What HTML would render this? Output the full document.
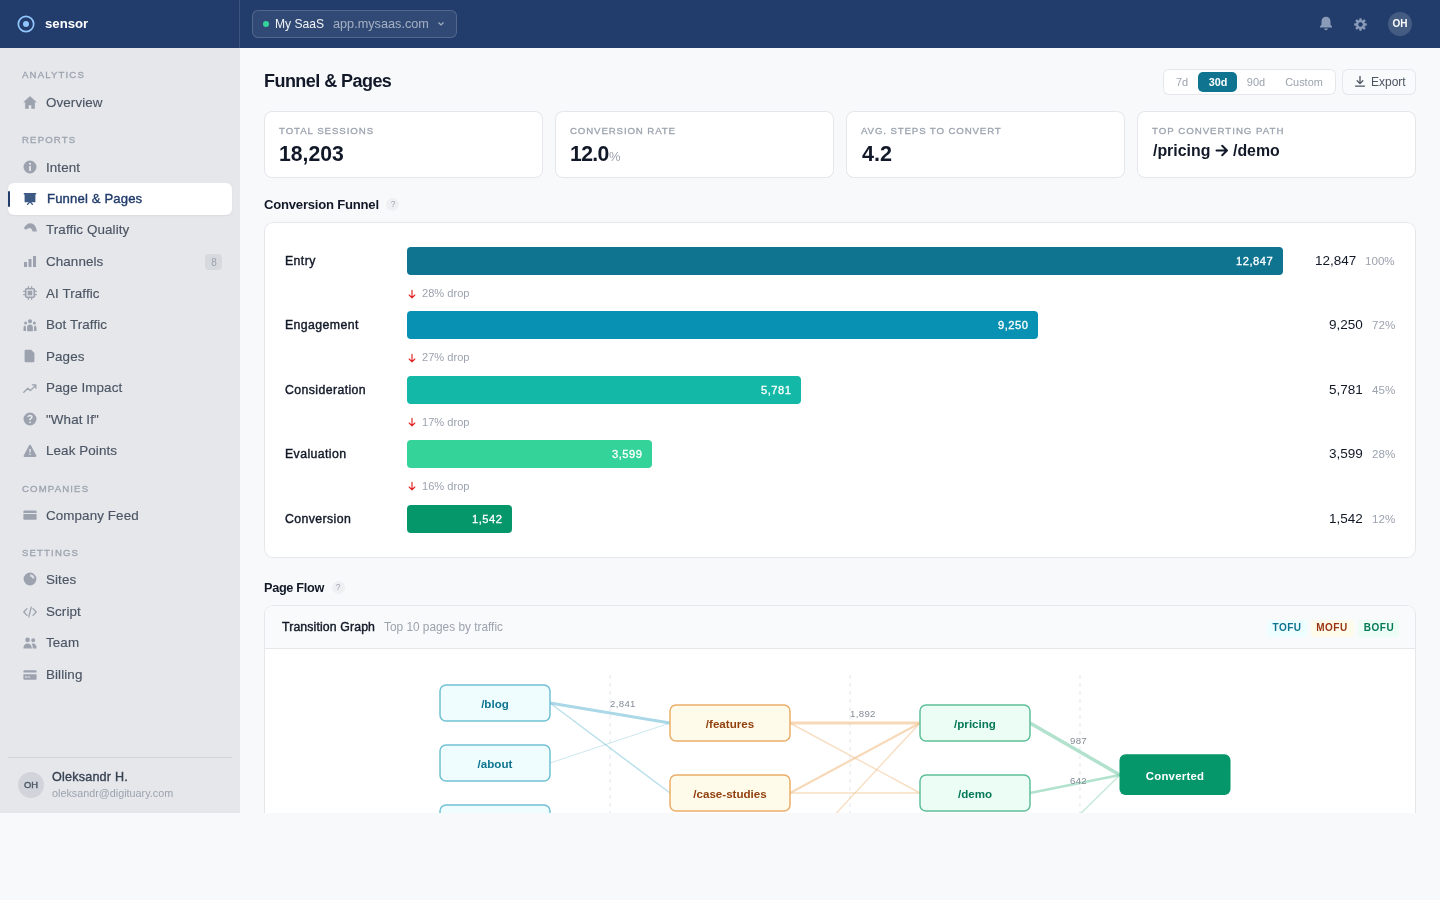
<!DOCTYPE html>
<html><head><meta charset="utf-8"><title>Funnel & Pages</title>
<style>
html,body{margin:0;padding:0;}
body{width:1440px;height:900px;position:relative;overflow:hidden;background:#f8f9fb;font-family:"Liberation Sans",sans-serif;}
.t{position:absolute;white-space:nowrap;line-height:1;will-change:transform;}
.b{position:absolute;box-sizing:border-box;}
</style></head><body>
<div class="b" style="left:240px;top:48px;width:1200px;height:765px;background:#f8f9fb;"></div>
<div class="b" style="left:0px;top:48px;width:240px;height:765px;background:#e5e7eb;"></div>
<div class="b" style="left:0px;top:0px;width:1440px;height:48px;background:#223d6b;"></div>
<div class="b" style="left:239px;top:0px;width:1px;height:48px;background:rgba(255,255,255,0.12);"></div>
<svg class="b" style="left:16px;top:14px;" width="20" height="20" viewBox="0 0 20 20"><circle cx="10" cy="10" r="7.7" fill="none" stroke="#93c5fd" stroke-width="1.7"/><circle cx="10" cy="10" r="3" fill="#93c5fd"/></svg>
<div class="t" style="top:17.00px;font-size:13.2px;font-weight:700;color:#ffffff;left:44.5px;">sensor</div>
<div class="b" style="left:252px;top:10px;width:205px;height:28px;background:rgba(255,255,255,0.07);box-shadow:inset 0 0 0 1px rgba(255,255,255,0.16);border-radius:6px;"></div>
<svg class="b" style="left:263px;top:21px;" width="6" height="6" viewBox="0 0 6 6"><circle cx="3" cy="3" r="3" fill="#34d399"/></svg>
<div class="t" style="top:17.95px;font-size:12.1px;font-weight:400;color:#f3f4f6;left:275.3px;">My SaaS</div>
<div class="t" style="top:18.35px;font-size:12.7px;font-weight:400;color:rgba(255,255,255,0.55);left:333px;">app.mysaas.com</div>
<svg class="b" style="left:437px;top:21px;" width="8" height="6" viewBox="0 0 8 6"><path d="M1.5 1.5 L4 4 L6.5 1.5" fill="none" stroke="rgba(255,255,255,0.55)" stroke-width="1.2"/></svg>
<svg class="b" style="left:1319px;top:16px;" width="14" height="15" viewBox="0 0 14 15"><path d="M7 0.8c-2.6 0-4.5 2-4.5 4.6v3.2L1 10.6v1h12v-1l-1.5-2V5.4C11.5 2.8 9.6 0.8 7 0.8z M5.2 12.4a1.8 1.8 0 003.6 0z" fill="#8a9bb8"/></svg>
<svg class="b" style="left:1352.5px;top:16.5px;" width="15" height="15" viewBox="0 0 15 15"><g fill="#8a9bb8"><circle cx="7.5" cy="7.5" r="4.6"/><rect x="6.3" y="1.2" width="2.4" height="2.8" rx="0.5" transform="rotate(0 7.5 7.5)"/><rect x="6.3" y="1.2" width="2.4" height="2.8" rx="0.5" transform="rotate(45 7.5 7.5)"/><rect x="6.3" y="1.2" width="2.4" height="2.8" rx="0.5" transform="rotate(90 7.5 7.5)"/><rect x="6.3" y="1.2" width="2.4" height="2.8" rx="0.5" transform="rotate(135 7.5 7.5)"/><rect x="6.3" y="1.2" width="2.4" height="2.8" rx="0.5" transform="rotate(180 7.5 7.5)"/><rect x="6.3" y="1.2" width="2.4" height="2.8" rx="0.5" transform="rotate(225 7.5 7.5)"/><rect x="6.3" y="1.2" width="2.4" height="2.8" rx="0.5" transform="rotate(270 7.5 7.5)"/><rect x="6.3" y="1.2" width="2.4" height="2.8" rx="0.5" transform="rotate(315 7.5 7.5)"/></g><circle cx="7.5" cy="7.5" r="2.2" fill="#223d6b"/></svg>
<div class="b" style="left:1388px;top:12px;width:24px;height:24px;background:rgba(255,255,255,0.16);border-radius:12px;"></div>
<div class="t" style="top:19.10px;font-size:10px;font-weight:700;color:#ffffff;left:1100px;width:600px;text-align:center;">OH</div>
<div class="t" style="top:70.20px;font-size:9.6px;font-weight:400;color:#9ca3af;letter-spacing:1.15px;left:22.2px;-webkit-text-stroke:0.3px #9ca3af;">ANALYTICS</div>
<div class="t" style="top:135.20px;font-size:9.6px;font-weight:400;color:#9ca3af;letter-spacing:1.15px;left:22.2px;-webkit-text-stroke:0.3px #9ca3af;">REPORTS</div>
<div class="t" style="top:483.60px;font-size:9.6px;font-weight:400;color:#9ca3af;letter-spacing:1.15px;left:22.2px;-webkit-text-stroke:0.3px #9ca3af;">COMPANIES</div>
<div class="t" style="top:548.00px;font-size:9.6px;font-weight:400;color:#9ca3af;letter-spacing:1.15px;left:22.2px;-webkit-text-stroke:0.3px #9ca3af;">SETTINGS</div>
<div class="b" style="left:8px;top:183px;width:224px;height:32px;background:#ffffff;border-radius:6px;box-shadow:0 1px 2px rgba(15,23,42,0.06);"></div>
<div class="b" style="left:8px;top:191px;width:2px;height:16px;background:#223d6b;border-radius:1px;"></div>
<svg class="b" style="left:23px;top:95px;" width="14" height="14" viewBox="0 0 14 14"><path fill="#9ca3af" stroke="#9ca3af" stroke-width="0.6" stroke-linejoin="round" d="M7 1.4 L13.2 7 L11.6 7 L11.6 13.6 L8.6 13.6 L8.6 10 L5.4 10 L5.4 13.6 L2.4 13.6 L2.4 7 L0.8 7 Z"/></svg>
<div class="t" style="top:96.00px;font-size:13.4px;font-weight:400;color:#4b5563;letter-spacing:0.1px;left:46.3px;-webkit-text-stroke:0.15px #4b5563;">Overview</div>
<svg class="b" style="left:23px;top:160px;" width="14" height="14" viewBox="0 0 14 14"><path fill="#9ca3af" fill-rule="evenodd" d="M7 0.5a6.5 6.5 0 110 13 6.5 6.5 0 010-13z M6.1 6h1.8v5H6.1z M7 2.8a1.05 1.05 0 110 2.1 1.05 1.05 0 010-2.1z"/></svg>
<div class="t" style="top:161.00px;font-size:13.4px;font-weight:400;color:#4b5563;letter-spacing:0.1px;left:46.3px;-webkit-text-stroke:0.15px #4b5563;">Intent</div>
<svg class="b" style="left:23px;top:191px;" width="14" height="14" viewBox="0 0 14 14"><path fill="#3d5a85" d="M0.8 2h12.4v1.6h-0.8v7.6H1.6V3.6H0.8z"/><path fill="none" stroke="#3d5a85" stroke-width="1.3" stroke-linecap="round" d="M7 10.6 L4.6 13.4 M7 10.6 L9.4 13.4"/></svg>
<div class="t" style="top:191.95px;font-size:13.1px;font-weight:400;color:#223d6b;letter-spacing:0.15px;left:46.5px;-webkit-text-stroke:0.4px #223d6b;">Funnel & Pages</div>
<svg class="b" style="left:23px;top:223px;" width="14" height="14" viewBox="0 0 14 14"><path fill="#9ca3af" d="M0.9 5.6 C2.2 2.2 4.6 0.3 7.4 0.3 C10.8 0.3 13.3 3.2 13.9 8.6 L9.6 8.6 C9.1 6.4 8 5 6.6 5 C5.2 5 4.2 5.8 3.4 6.8 Z"/></svg>
<div class="t" style="top:223.40px;font-size:13.4px;font-weight:400;color:#4b5563;letter-spacing:0.1px;left:46.3px;-webkit-text-stroke:0.15px #4b5563;">Traffic Quality</div>
<svg class="b" style="left:23px;top:254px;" width="14" height="14" viewBox="0 0 14 14"><path fill="#9ca3af" d="M1 8h3v5H1z M5.5 5h3v8h-3z M10 2h3v11h-3z"/></svg>
<div class="t" style="top:255.00px;font-size:13.4px;font-weight:400;color:#4b5563;letter-spacing:0.1px;left:46.3px;-webkit-text-stroke:0.15px #4b5563;">Channels</div>
<svg class="b" style="left:23px;top:286px;" width="14" height="14" viewBox="0 0 14 14"><rect x="2.7" y="2.7" width="8.6" height="8.6" rx="1" fill="none" stroke="#9ca3af" stroke-width="1.6"/><rect x="4.7" y="4.7" width="4.6" height="4.6" fill="#9ca3af"/><path stroke="#9ca3af" stroke-width="1.3" d="M5.4 0.2v2.4 M8.6 0.2v2.4 M5.4 11.4v2.4 M8.6 11.4v2.4 M0.2 5.4h2.4 M0.2 8.6h2.4 M11.4 5.4h2.4 M11.4 8.6h2.4"/></svg>
<div class="t" style="top:286.60px;font-size:13.4px;font-weight:400;color:#4b5563;letter-spacing:0.1px;left:46.3px;-webkit-text-stroke:0.15px #4b5563;">AI Traffic</div>
<svg class="b" style="left:23px;top:318px;" width="14" height="14" viewBox="0 0 14 14"><path fill="#9ca3af" d="M7 1.2a2.1 2.1 0 110 4.2 2.1 2.1 0 010-4.2z M2.6 3.6a1.5 1.5 0 110 3 1.5 1.5 0 010-3z M11.4 3.6a1.5 1.5 0 110 3 1.5 1.5 0 010-3z M4.1 13.2 V9.6 C4.1 7.6 5.3 6.6 7 6.6 C8.7 6.6 9.9 7.6 9.9 9.6 V13.2z M0.5 13 V9.6 C0.5 8.4 1.1 7.6 2.2 7.4 C2.8 8 3 9 3 10 V13z M13.5 13 V9.6 C13.5 8.4 12.9 7.6 11.8 7.4 C11.2 8 11 9 11 10 V13z"/></svg>
<div class="t" style="top:318.20px;font-size:13.4px;font-weight:400;color:#4b5563;letter-spacing:0.1px;left:46.3px;-webkit-text-stroke:0.15px #4b5563;">Bot Traffic</div>
<svg class="b" style="left:23px;top:349px;" width="14" height="14" viewBox="0 0 14 14"><path fill="#9ca3af" d="M2.6 0.8h5.6l3.2 3.2v8.2a1 1 0 01-1 1H2.6a1 1 0 01-1-1V1.8a1 1 0 011-1z"/></svg>
<div class="t" style="top:349.80px;font-size:13.4px;font-weight:400;color:#4b5563;letter-spacing:0.1px;left:46.3px;-webkit-text-stroke:0.15px #4b5563;">Pages</div>
<svg class="b" style="left:23px;top:381px;" width="14" height="14" viewBox="0 0 14 14"><path fill="none" stroke="#9ca3af" stroke-width="1.3" stroke-linecap="round" stroke-linejoin="round" d="M0.8 11.2 L4.8 7.2 L7.4 9.6 L12.8 4.2 M9.4 3.8 L12.8 3.8 L12.8 7.2"/></svg>
<div class="t" style="top:381.20px;font-size:13.4px;font-weight:400;color:#4b5563;letter-spacing:0.1px;left:46.3px;-webkit-text-stroke:0.15px #4b5563;">Page Impact</div>
<svg class="b" style="left:23px;top:412px;" width="14" height="14" viewBox="0 0 14 14"><path fill="#9ca3af" fill-rule="evenodd" d="M7 0.5a6.5 6.5 0 110 13 6.5 6.5 0 010-13z M7 2.8c-1.5 0-2.6 0.9-2.7 2.3h1.6c0.1-0.6 0.5-0.9 1.1-0.9 0.6 0 1 0.4 1 0.9 0 0.5-0.3 0.7-0.9 1.1-0.7 0.4-1 0.9-1 1.8v0.3h1.6v-0.3c0-0.5 0.2-0.7 0.8-1.1 0.7-0.4 1.2-1 1.2-1.9 0-1.3-1.1-2.2-2.7-2.2z M7 9.4a0.95 0.95 0 110 1.9 0.95 0.95 0 010-1.9z"/></svg>
<div class="t" style="top:412.80px;font-size:13.4px;font-weight:400;color:#4b5563;letter-spacing:0.1px;left:46.3px;-webkit-text-stroke:0.15px #4b5563;">"What If"</div>
<svg class="b" style="left:23px;top:444px;" width="14" height="14" viewBox="0 0 14 14"><path fill="#9ca3af" fill-rule="evenodd" d="M6.1 1.3 a1 1 0 011.8 0 L13.3 11.4 a1 1 0 01-0.9 1.5 H1.6 a1 1 0 01-0.9-1.5z M6.3 5h1.4v3.6H6.3z M7 9.4a0.8 0.8 0 110 1.6 0.8 0.8 0 010-1.6z"/></svg>
<div class="t" style="top:444.20px;font-size:13.4px;font-weight:400;color:#4b5563;letter-spacing:0.1px;left:46.3px;-webkit-text-stroke:0.15px #4b5563;">Leak Points</div>
<svg class="b" style="left:23px;top:508px;" width="14" height="14" viewBox="0 0 14 14"><path fill="#9ca3af" d="M1.2 2.5h11.6a0.8 0.8 0 01.8 .8v1.6H0.4V3.3a0.8 0.8 0 01.8-.8z M0.4 5.9h13.2v5a0.8 0.8 0 01-.8 .8H1.2a0.8 0.8 0 01-.8-.8z"/></svg>
<div class="t" style="top:509.00px;font-size:13.4px;font-weight:400;color:#4b5563;letter-spacing:0.1px;left:46.3px;-webkit-text-stroke:0.15px #4b5563;">Company Feed</div>
<svg class="b" style="left:23px;top:572px;" width="14" height="14" viewBox="0 0 14 14"><path fill="#9ca3af" d="M7 0.6a6.4 6.4 0 110 12.8 6.4 6.4 0 010-12.8z"/><path fill="#e5e7eb" d="M7.2 2.2 C9.6 2.4 11.2 4 11.6 6.2 L9.4 6.4 C9 5.4 8.2 4.8 7.2 4.6z" opacity="0.9"/></svg>
<div class="t" style="top:573.10px;font-size:13.4px;font-weight:400;color:#4b5563;letter-spacing:0.1px;left:46.3px;-webkit-text-stroke:0.15px #4b5563;">Sites</div>
<svg class="b" style="left:23px;top:605px;" width="14" height="14" viewBox="0 0 14 14"><path fill="none" stroke="#9ca3af" stroke-width="1.3" stroke-linecap="round" stroke-linejoin="round" d="M4 3.6 L0.8 7 L4 10.4 M10 3.6 L13.2 7 L10 10.4 M8.2 2.2 L5.8 11.8"/></svg>
<div class="t" style="top:605.20px;font-size:13.4px;font-weight:400;color:#4b5563;letter-spacing:0.1px;left:46.3px;-webkit-text-stroke:0.15px #4b5563;">Script</div>
<svg class="b" style="left:23px;top:636px;" width="14" height="14" viewBox="0 0 14 14"><path fill="#9ca3af" d="M4.6 1.6a2.3 2.3 0 110 4.6 2.3 2.3 0 010-4.6z M10.2 2.2a2 2 0 110 4 2 2 0 010-4z M0.4 12.4 C0.4 9.2 2.2 7.4 4.6 7.4 C7 7.4 8.8 9.2 8.8 12.4z M9.8 12.4 C9.8 10.4 9.4 8.8 8.6 7.8 C9 7.5 9.6 7.4 10.2 7.4 C12.2 7.4 13.6 9 13.6 12.4z"/></svg>
<div class="t" style="top:636.10px;font-size:13.4px;font-weight:400;color:#4b5563;letter-spacing:0.1px;left:46.3px;-webkit-text-stroke:0.15px #4b5563;">Team</div>
<svg class="b" style="left:23px;top:668px;" width="14" height="14" viewBox="0 0 14 14"><path fill="#9ca3af" d="M1.4 2.2h11.2a1 1 0 011 1v1.4H0.4V3.2a1 1 0 011-1z M0.4 6.2h13.2v4.6a1 1 0 01-1 1H1.4a1 1 0 01-1-1z"/><rect x="2" y="8.4" width="2.6" height="1.2" fill="#e5e7eb"/><rect x="5.4" y="8.4" width="1.6" height="1.2" fill="#e5e7eb"/></svg>
<div class="t" style="top:668.40px;font-size:13.4px;font-weight:400;color:#4b5563;letter-spacing:0.1px;left:46.3px;-webkit-text-stroke:0.15px #4b5563;">Billing</div>
<div class="b" style="left:205px;top:254px;width:17px;height:16px;background:#d6d9de;border-radius:4px;"></div>
<div class="t" style="top:257.50px;font-size:10px;font-weight:400;color:#9ca3af;left:-86.5px;width:600px;text-align:center;">8</div>
<div class="b" style="left:8px;top:757px;width:224px;height:1px;background:#d1d5db;"></div>
<div class="b" style="left:18px;top:772px;width:26px;height:26px;background:#d1d5db;border-radius:13px;"></div>
<div class="t" style="top:780.40px;font-size:9.4px;font-weight:400;color:#4b5563;left:-269px;width:600px;text-align:center;-webkit-text-stroke:0.4px #4b5563;">OH</div>
<div class="t" style="top:770.90px;font-size:12.6px;font-weight:400;color:#374151;letter-spacing:0.2px;left:52px;-webkit-text-stroke:0.35px #374151;">Oleksandr H.</div>
<div class="t" style="top:787.60px;font-size:10.8px;font-weight:400;color:#9ca3af;left:52px;">oleksandr@digituary.com</div>
<div class="t" style="top:72.40px;font-size:18px;font-weight:700;color:#111827;letter-spacing:-0.55px;left:264px;">Funnel &amp; Pages</div>
<div class="b" style="left:1163px;top:69px;width:173px;height:26px;background:#ffffff;box-shadow:inset 0 0 0 1px #e5e7eb;border-radius:6px;"></div>
<div class="b" style="left:1198px;top:72px;width:39px;height:20px;background:#0e7490;border-radius:5px;"></div>
<div class="t" style="top:76.50px;font-size:11px;font-weight:400;color:#9ca3af;left:882px;width:600px;text-align:center;">7d</div>
<div class="t" style="top:76.60px;font-size:10.8px;font-weight:700;color:#ffffff;left:917.5px;width:600px;text-align:center;">30d</div>
<div class="t" style="top:76.50px;font-size:11px;font-weight:400;color:#9ca3af;left:956px;width:600px;text-align:center;">90d</div>
<div class="t" style="top:76.55px;font-size:10.9px;font-weight:400;color:#9ca3af;left:1004.3px;width:600px;text-align:center;">Custom</div>
<div class="b" style="left:1342px;top:69px;width:74px;height:26px;background:#f9fafb;box-shadow:inset 0 0 0 1px #e5e7eb;border-radius:6px;"></div>
<svg class="b" style="left:1354px;top:75px;" width="12" height="13" viewBox="0 0 12 13"><path fill="none" stroke="#4b5563" stroke-width="1.3" stroke-linecap="round" stroke-linejoin="round" d="M6 1.5v7 M3.2 5.8 L6 8.6 L8.8 5.8 M1.6 11.2h8.8"/></svg>
<div class="t" style="top:76.30px;font-size:12px;font-weight:400;color:#4b5563;left:1370.5px;">Export</div>
<div class="b" style="left:264px;top:111px;width:279px;height:67px;background:#ffffff;box-shadow:inset 0 0 0 1px #e5e7eb;border-radius:8px;"></div>
<div class="t" style="top:126.05px;font-size:9.7px;font-weight:400;color:#9ca3af;letter-spacing:0.92px;left:279.4px;-webkit-text-stroke:0.3px #9ca3af;">TOTAL SESSIONS</div>
<div class="b" style="left:555px;top:111px;width:279px;height:67px;background:#ffffff;box-shadow:inset 0 0 0 1px #e5e7eb;border-radius:8px;"></div>
<div class="t" style="top:126.05px;font-size:9.7px;font-weight:400;color:#9ca3af;letter-spacing:0.86px;left:570.4px;-webkit-text-stroke:0.3px #9ca3af;">CONVERSION RATE</div>
<div class="b" style="left:846px;top:111px;width:279px;height:67px;background:#ffffff;box-shadow:inset 0 0 0 1px #e5e7eb;border-radius:8px;"></div>
<div class="t" style="top:126.05px;font-size:9.7px;font-weight:400;color:#9ca3af;letter-spacing:0.86px;left:861.4px;-webkit-text-stroke:0.3px #9ca3af;">AVG. STEPS TO CONVERT</div>
<div class="b" style="left:1137px;top:111px;width:279px;height:67px;background:#ffffff;box-shadow:inset 0 0 0 1px #e5e7eb;border-radius:8px;"></div>
<div class="t" style="top:126.05px;font-size:9.7px;font-weight:400;color:#9ca3af;letter-spacing:0.98px;left:1152.4px;-webkit-text-stroke:0.3px #9ca3af;">TOP CONVERTING PATH</div>
<div class="t" style="top:143.10px;font-size:21.2px;font-weight:700;color:#111827;left:279.3px;">18,203</div>
<div class="t" style="top:143.10px;font-size:21.2px;font-weight:700;color:#111827;letter-spacing:-0.65px;left:570.3px;">12.0</div>
<div class="t" style="top:150.20px;font-size:13px;font-weight:400;color:#9ca3af;left:608.8px;">%</div>
<div class="t" style="top:142.90px;font-size:21.6px;font-weight:700;color:#111827;left:861.5px;">4.2</div>
<div class="t" style="top:142.85px;font-size:15.9px;font-weight:700;color:#111827;left:1152.5px;">/pricing</div>
<svg class="b" style="left:1215px;top:144px;" width="14" height="13" viewBox="0 0 14 13"><path fill="none" stroke="#111827" stroke-width="2" stroke-linecap="round" stroke-linejoin="round" d="M1.5 6.5h10.5 M7.2 1.8 L12 6.5 L7.2 11.2"/></svg>
<div class="t" style="top:142.85px;font-size:15.9px;font-weight:700;color:#111827;left:1233px;">/demo</div>
<div class="t" style="top:197.85px;font-size:13.1px;font-weight:700;color:#111827;letter-spacing:-0.22px;left:264.3px;">Conversion Funnel</div>
<div class="b" style="left:386.0px;top:197.5px;width:13px;height:13px;background:#eef0f3;border-radius:7px;"></div>
<div class="t" style="top:199.75px;font-size:8.5px;font-weight:400;color:#9ca3af;left:92.5px;width:600px;text-align:center;">?</div>
<div class="b" style="left:264px;top:222px;width:1152px;height:336px;background:#ffffff;box-shadow:inset 0 0 0 1px #e5e7eb;border-radius:9px;"></div>
<div class="t" style="top:254.65px;font-size:12.3px;font-weight:400;color:#111827;letter-spacing:0.4px;left:285.3px;-webkit-text-stroke:0.4px #111827;">Entry</div>
<div class="b" style="left:407px;top:247px;width:876px;height:28px;background:#0e7490;border-radius:4px;"></div>
<div class="t" style="top:255.80px;font-size:11.2px;font-weight:400;color:#ffffff;letter-spacing:0.5px;right:166.5px;-webkit-text-stroke:0.3px #ffffff;">12,847</div>
<div class="t" style="top:255.40px;font-size:11.6px;font-weight:400;color:#9ca3af;right:45px;">100%</div>
<div class="t" style="top:254.35px;font-size:13.5px;font-weight:400;color:#111827;right:84.0px;">12,847</div>
<div class="t" style="top:318.65px;font-size:12.3px;font-weight:400;color:#111827;letter-spacing:0.4px;left:285.3px;-webkit-text-stroke:0.4px #111827;">Engagement</div>
<div class="b" style="left:407px;top:311px;width:631px;height:28px;background:#0891b2;border-radius:4px;"></div>
<div class="t" style="top:319.80px;font-size:11.2px;font-weight:400;color:#ffffff;letter-spacing:0.5px;right:411.5px;-webkit-text-stroke:0.3px #ffffff;">9,250</div>
<div class="t" style="top:319.40px;font-size:11.6px;font-weight:400;color:#9ca3af;right:45px;">72%</div>
<div class="t" style="top:318.35px;font-size:13.5px;font-weight:400;color:#111827;right:77.20000000000005px;">9,250</div>
<div class="t" style="top:383.65px;font-size:12.3px;font-weight:400;color:#111827;letter-spacing:0.4px;left:285.3px;-webkit-text-stroke:0.4px #111827;">Consideration</div>
<div class="b" style="left:407px;top:376px;width:394px;height:28px;background:#14b8a6;border-radius:4px;"></div>
<div class="t" style="top:384.80px;font-size:11.2px;font-weight:400;color:#ffffff;letter-spacing:0.5px;right:648.5px;-webkit-text-stroke:0.3px #ffffff;">5,781</div>
<div class="t" style="top:384.40px;font-size:11.6px;font-weight:400;color:#9ca3af;right:45px;">45%</div>
<div class="t" style="top:383.35px;font-size:13.5px;font-weight:400;color:#111827;right:77.20000000000005px;">5,781</div>
<div class="t" style="top:447.65px;font-size:12.3px;font-weight:400;color:#111827;letter-spacing:0.4px;left:285.3px;-webkit-text-stroke:0.4px #111827;">Evaluation</div>
<div class="b" style="left:407px;top:440px;width:245px;height:28px;background:#34d399;border-radius:4px;"></div>
<div class="t" style="top:448.80px;font-size:11.2px;font-weight:400;color:#ffffff;letter-spacing:0.5px;right:797.5px;-webkit-text-stroke:0.3px #ffffff;">3,599</div>
<div class="t" style="top:448.40px;font-size:11.6px;font-weight:400;color:#9ca3af;right:45px;">28%</div>
<div class="t" style="top:447.35px;font-size:13.5px;font-weight:400;color:#111827;right:77.20000000000005px;">3,599</div>
<div class="t" style="top:512.65px;font-size:12.3px;font-weight:400;color:#111827;letter-spacing:0.4px;left:285.3px;-webkit-text-stroke:0.4px #111827;">Conversion</div>
<div class="b" style="left:407px;top:505px;width:105px;height:28px;background:#059669;border-radius:4px;"></div>
<div class="t" style="top:513.80px;font-size:11.2px;font-weight:400;color:#ffffff;letter-spacing:0.5px;right:937.5px;-webkit-text-stroke:0.3px #ffffff;">1,542</div>
<div class="t" style="top:513.40px;font-size:11.6px;font-weight:400;color:#9ca3af;right:45px;">12%</div>
<div class="t" style="top:512.35px;font-size:13.5px;font-weight:400;color:#111827;right:77.20000000000005px;">1,542</div>
<svg class="b" style="left:406.5px;top:288.8px;" width="10" height="10" viewBox="0 0 10 10"><path fill="none" stroke="#e02424" stroke-width="1.15" stroke-linecap="round" stroke-linejoin="round" d="M5 1.2v7.6 M2.2 6 L5 8.8 L7.8 6"/></svg>
<div class="t" style="top:288.25px;font-size:11.1px;font-weight:400;color:#9ca3af;left:422px;">28% drop</div>
<svg class="b" style="left:406.5px;top:352.6px;" width="10" height="10" viewBox="0 0 10 10"><path fill="none" stroke="#e02424" stroke-width="1.15" stroke-linecap="round" stroke-linejoin="round" d="M5 1.2v7.6 M2.2 6 L5 8.8 L7.8 6"/></svg>
<div class="t" style="top:352.05px;font-size:11.1px;font-weight:400;color:#9ca3af;left:422px;">27% drop</div>
<svg class="b" style="left:406.5px;top:417.4px;" width="10" height="10" viewBox="0 0 10 10"><path fill="none" stroke="#e02424" stroke-width="1.15" stroke-linecap="round" stroke-linejoin="round" d="M5 1.2v7.6 M2.2 6 L5 8.8 L7.8 6"/></svg>
<div class="t" style="top:416.85px;font-size:11.1px;font-weight:400;color:#9ca3af;left:422px;">17% drop</div>
<svg class="b" style="left:406.5px;top:481.4px;" width="10" height="10" viewBox="0 0 10 10"><path fill="none" stroke="#e02424" stroke-width="1.15" stroke-linecap="round" stroke-linejoin="round" d="M5 1.2v7.6 M2.2 6 L5 8.8 L7.8 6"/></svg>
<div class="t" style="top:480.85px;font-size:11.1px;font-weight:400;color:#9ca3af;left:422px;">16% drop</div>
<div class="t" style="top:582.45px;font-size:12.7px;font-weight:700;color:#111827;letter-spacing:-0.3px;left:264px;">Page Flow</div>
<div class="b" style="left:331.5px;top:581.0px;width:13px;height:13px;background:#eef0f3;border-radius:7px;"></div>
<div class="t" style="top:583.25px;font-size:8.5px;font-weight:400;color:#9ca3af;left:38px;width:600px;text-align:center;">?</div>
<div class="b" style="left:264px;top:605px;width:1152px;height:230px;background:#ffffff;box-shadow:inset 0 0 0 1px #e5e7eb;border-radius:9px;"></div>
<div class="b" style="left:265px;top:606px;width:1150px;height:42px;background:#f9fafb;border-radius:8px 8px 0 0;"></div>
<div class="b" style="left:265px;top:648px;width:1150px;height:1px;background:#e5e7eb;"></div>
<div class="t" style="top:621.35px;font-size:12.3px;font-weight:400;color:#111827;letter-spacing:0.12px;left:281.5px;-webkit-text-stroke:0.4px #111827;">Transition Graph</div>
<div class="t" style="top:621.58px;font-size:11.85px;font-weight:400;color:#9ca3af;left:384px;">Top 10 pages by traffic</div>
<div class="b" style="left:1267px;top:619.5px;width:40px;height:17px;background:#ecfeff;border-radius:4px;"></div>
<div class="t" style="top:622.80px;font-size:10px;font-weight:700;color:#0e7490;letter-spacing:0.5px;left:987.0px;width:600px;text-align:center;">TOFU</div>
<div class="b" style="left:1310.5px;top:619.5px;width:43px;height:17px;background:#fffbeb;border-radius:4px;"></div>
<div class="t" style="top:622.80px;font-size:10px;font-weight:700;color:#9a3412;letter-spacing:0.5px;left:1032.0px;width:600px;text-align:center;">MOFU</div>
<div class="b" style="left:1358px;top:619.5px;width:41px;height:17px;background:#ecfdf5;border-radius:4px;"></div>
<div class="t" style="top:622.80px;font-size:10px;font-weight:700;color:#047857;letter-spacing:0.5px;left:1078.5px;width:600px;text-align:center;">BOFU</div>
<svg class="b" style="left:0;top:0;will-change:transform;font-family:'Liberation Sans',sans-serif" width="1440" height="900" viewBox="0 0 1440 900"><line x1="610" y1="675" x2="610" y2="900" stroke="#e5e7eb" stroke-width="1" stroke-dasharray="4 4"/><line x1="850" y1="675" x2="850" y2="900" stroke="#e5e7eb" stroke-width="1" stroke-dasharray="4 4"/><line x1="1080" y1="675" x2="1080" y2="900" stroke="#e5e7eb" stroke-width="1" stroke-dasharray="4 4"/><line x1="550" y1="703" x2="670" y2="723" stroke="#7cc3d9" stroke-width="3" stroke-opacity="0.65"/><line x1="550" y1="703" x2="670" y2="793" stroke="#7cc3d9" stroke-width="1.5" stroke-opacity="0.5"/><line x1="550" y1="763" x2="670" y2="723" stroke="#7cc3d9" stroke-width="1" stroke-opacity="0.4"/><line x1="790" y1="723" x2="920" y2="723" stroke="#f2c08a" stroke-width="3" stroke-opacity="0.6"/><line x1="790" y1="723" x2="920" y2="793" stroke="#f2c08a" stroke-width="1.5" stroke-opacity="0.5"/><line x1="790" y1="793" x2="920" y2="723" stroke="#f2c08a" stroke-width="2.2" stroke-opacity="0.6"/><line x1="790" y1="793" x2="920" y2="793" stroke="#f2c08a" stroke-width="1.5" stroke-opacity="0.5"/><line x1="790" y1="863" x2="920" y2="723" stroke="#f2c08a" stroke-width="1.5" stroke-opacity="0.5"/><line x1="1030" y1="723" x2="1120" y2="775" stroke="#7fcfad" stroke-width="3.5" stroke-opacity="0.6"/><line x1="1030" y1="793" x2="1120" y2="775" stroke="#7fcfad" stroke-width="2.5" stroke-opacity="0.6"/><line x1="1030" y1="863" x2="1120" y2="775" stroke="#7fcfad" stroke-width="1.5" stroke-opacity="0.45"/><rect x="440" y="685" width="110" height="36" rx="6" fill="#effdfe" stroke="#72c1d4" stroke-width="1.5"/><text x="495.0" y="708.0" text-anchor="middle" font-size="11.6" font-weight="700" fill="#0e7490">/blog</text><rect x="440" y="745" width="110" height="36" rx="6" fill="#effdfe" stroke="#72c1d4" stroke-width="1.5"/><text x="495.0" y="768.0" text-anchor="middle" font-size="11.6" font-weight="700" fill="#0e7490">/about</text><rect x="440" y="805" width="110" height="36" rx="6" fill="#effdfe" stroke="#72c1d4" stroke-width="1.5"/><text x="495.0" y="828.0" text-anchor="middle" font-size="11.6" font-weight="700" fill="#0e7490">/docs</text><rect x="670" y="705" width="120" height="36" rx="6" fill="#fffbea" stroke="#eaae6a" stroke-width="1.5"/><text x="730.0" y="728.0" text-anchor="middle" font-size="11.6" font-weight="700" fill="#92400e">/features</text><rect x="670" y="775" width="120" height="36" rx="6" fill="#fffbea" stroke="#eaae6a" stroke-width="1.5"/><text x="730.0" y="798.0" text-anchor="middle" font-size="11.6" font-weight="700" fill="#92400e">/case-studies</text><rect x="670" y="845" width="120" height="36" rx="6" fill="#fffbea" stroke="#eaae6a" stroke-width="1.5"/><text x="730.0" y="868.0" text-anchor="middle" font-size="11.6" font-weight="700" fill="#92400e">/integrations</text><rect x="920" y="705" width="110" height="36" rx="6" fill="#ecfdf5" stroke="#5fbf98" stroke-width="1.5"/><text x="975.0" y="728.0" text-anchor="middle" font-size="11.6" font-weight="700" fill="#047857">/pricing</text><rect x="920" y="775" width="110" height="36" rx="6" fill="#ecfdf5" stroke="#5fbf98" stroke-width="1.5"/><text x="975.0" y="798.0" text-anchor="middle" font-size="11.6" font-weight="700" fill="#047857">/demo</text><rect x="920" y="845" width="110" height="36" rx="6" fill="#ecfdf5" stroke="#5fbf98" stroke-width="1.5"/><text x="975.0" y="868.0" text-anchor="middle" font-size="11.6" font-weight="700" fill="#047857">/signup</text><rect x="1119.5" y="754.3" width="111" height="40.8" rx="6" fill="#059669"/><text x="1175" y="779.5" text-anchor="middle" font-size="11.4" font-weight="700" fill="#ffffff" letter-spacing="0.25">Converted</text><text x="610" y="707" font-size="9.6" letter-spacing="0.35" fill="#858c97">2,841</text><text x="850" y="716.8" font-size="9.6" letter-spacing="0.35" fill="#858c97">1,892</text><text x="1070" y="743.5" font-size="9.6" letter-spacing="0.35" fill="#858c97">987</text><text x="1070" y="783.5" font-size="9.6" letter-spacing="0.35" fill="#858c97">642</text></svg>
<div class="b" style="left:0px;top:813px;width:1440px;height:87px;background:#f8f9fb;"></div>
</body></html>
